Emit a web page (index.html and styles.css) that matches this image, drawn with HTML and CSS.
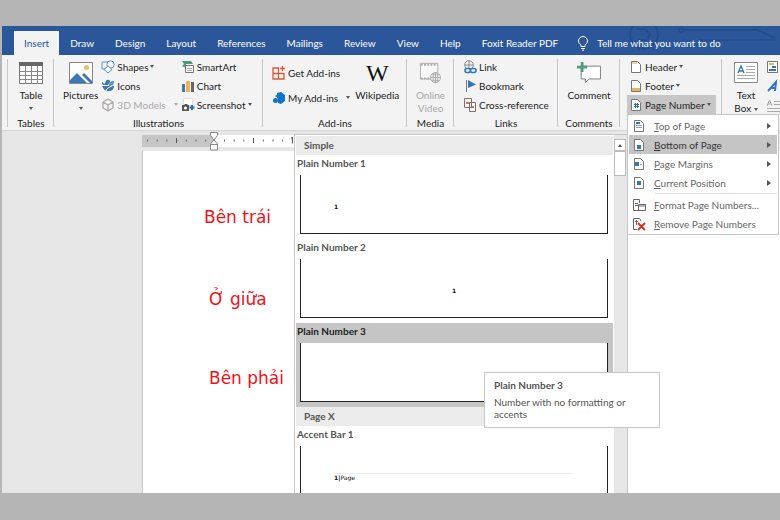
FILE: index.html
```
<!DOCTYPE html>
<html lang="en">
<head>
<meta charset="utf-8">
<title>Document - Word</title>
<link rel="stylesheet" href="styles.css">
</head>
<body>
<main class="app">
  <nav class="tabs" aria-label="Ribbon tabs">
    <button class="tab active">Insert</button>
    <button class="tab">Draw</button>
    <button class="tab">Design</button>
    <button class="tab">Layout</button>
    <button class="tab">References</button>
    <button class="tab">Mailings</button>
    <button class="tab">Review</button>
    <button class="tab">View</button>
    <button class="tab">Help</button>
    <button class="tab">Foxit Reader PDF</button>
    <button class="tab tell">
      <svg width="12" height="15" viewBox="0 0 12 15" fill="none" stroke="#fff"><path d="M4 10.500V9C2.500 7.800 1.500 6.800 1.500 5a4.500 4.500 0 0 1 9 0c0 1.800-1 2.800-2.500 4v1.500zM4 12.500h4M5 14.200h2"/></svg>
      Tell me what you want to do
    </button>
    <svg class="swirl" width="156" height="29" viewBox="0 0 156 29" fill="none" stroke="#264d8b" stroke-width="2"><circle cx="20" cy="9" r="14"/><path d="M13 3h8l5 5-3 6h-9M60 4h74l18 9M74 14h78"/><circle cx="57" cy="4" r="2"/></svg>
  </nav>

  <section class="ribbon" aria-label="Insert">
    <div class="group">
      <div class="tools">
        <button class="big">
          <svg width="24" height="22" viewBox="0 0 24 22"><path fill="#fff" stroke="#777" d="M.5.500h23v21H.5z"/><path fill="#666" d="M0 0h24v4H0z"/><path stroke="#888" d="M0 9.500h24M0 13.500h24M0 17.500h24M6.500 4v18M12.500 4v18M18.500 4v18"/></svg>
          <span>Table</span><i class="caret"></i>
        </button>
      </div>
      <h2>Tables</h2>
    </div>
    <div class="group">
      <div class="tools start">
        <button class="big">
          <svg width="24" height="22" viewBox="0 0 24 22"><path fill="#fff" stroke="#888" d="M.5.500h23v21H.5z"/><circle cx="17.500" cy="5.500" r="2.500" fill="#eebc6b"/><path fill="#3c78b4" d="M1 21v-3l7-7 10 10zM13 13l2-2 8 8v2h-2z"/></svg>
          <span>Pictures</span><i class="caret"></i>
        </button>
        <div class="stack shapes">
          <button class="row"><svg width="14" height="14" viewBox="0 0 14 14" fill="#f3f8fd" stroke="#5b8dbf"><path d="M1 2h6v7H1z"/><circle cx="9.500" cy="4.500" r="3.700"/><path d="M7 6l4 3.500L7 13 3 9.500z"/></svg>Shapes<i class="caret"></i></button>
          <button class="row"><svg width="14" height="14" viewBox="0 0 14 14"><path fill="#3f78ad" d="M1 3l3 2c0-3 2-5 4-4 1 0 1 1 1 2L7 6H3C1 6 1 4 1 3zM1 7h12c0 3-2 5-5 5-3 1-5-1-7-5z"/><path fill="#5b94c6" d="M8 6c0-3 2-4 5-4 0 3-1 5-5 5z"/><path stroke="#fff" fill="none" d="M5 12c1-3 3-4 6-5"/></svg>Icons</button>
          <button class="row off"><svg width="14" height="14" viewBox="0 0 14 14" fill="none" stroke="#aaa" stroke-width="1.300"><path d="M7 1l5 3v6l-5 3-5-3V4zM2 4l5 3 5-3M7 7v6"/></svg>3D Models<i class="caret far"></i></button>
        </div>
        <div class="stack">
          <button class="row"><svg width="14" height="14" viewBox="0 0 14 14"><path fill="#4c9c7c" d="M1 1h9l2 3H5v4L1 6l2-2z"/><path fill="#fff" stroke="#777" d="M4.500 5.500h8v7h-8z"/><path stroke="#aaa" d="M6 8.500h5M6 10.500h5"/></svg>SmartArt</button>
          <button class="row"><svg width="14" height="14" viewBox="0 0 14 14"><path fill="#3f78ad" d="M1 5h3v8H1z"/><path fill="#e9b35f" d="M5 2h4v11H5z"/><path fill="#666" d="M10 3h3v10h-3z"/></svg>Chart</button>
          <button class="row"><svg width="14" height="14" viewBox="0 0 14 14"><path fill="#fff" stroke="#ddd" d="M2.500.500h9v7h-9z"/><path fill="#555" d="M1 7h2l1-1h2l1 1h1v6H1z"/><circle cx="4.500" cy="10" r="1.600" fill="#fff"/><path stroke="#2d6da8" stroke-width="2" d="M8.500 9.500h5M11 7v5"/></svg>Screenshot<i class="caret"></i></button>
        </div>
      </div>
      <h2>Illustrations</h2>
    </div>
    <div class="group">
      <div class="tools start">
        <div class="stack pair">
          <button class="row"><svg width="14" height="14" viewBox="0 0 14 14" fill="none" stroke="#d7593c" stroke-width="1.300"><path d="M7 2H1v11h11V7M1 7.500h11M6.500 2v11M10.500 0v5M8 2.500h5"/></svg>Get Add-ins</button>
          <button class="row"><svg width="14" height="14" viewBox="0 0 14 14" fill="#1373c5"><path d="M5 2l4-1 4 3v6l-4 3-3-1V9L5 6z"/><circle cx="3.500" cy="9.500" r="2.500"/><path d="M3 5l3-2v4z"/></svg>My Add-ins<i class="caret far"></i></button>
        </div>
        <button class="big wiki">
          <b>W</b>
          <span>Wikipedia</span>
        </button>
      </div>
      <h2>Add-ins</h2>
    </div>
    <div class="group">
      <div class="tools">
        <button class="big off">
          <svg width="24" height="22" viewBox="0 0 24 24" fill="none" stroke="#aaa"><path fill="#f8f8f8" d="M1.500 1.500h19v17h-19z"/><path stroke-width="2" stroke-dasharray="2 1.500" d="M2 3h18M2 18h10"/><circle cx="18" cy="17" r="5.500" fill="#f3f3f3"/><path d="M12.500 17h11M18 11.500v11M14 14h8M14 20h8"/><ellipse cx="18" cy="17" rx="2.500" ry="5.500"/></svg>
          <span>Online<br>Video</span>
        </button>
      </div>
      <h2>Media</h2>
    </div>
    <div class="group">
      <div class="tools start">
        <div class="stack">
          <button class="row"><svg width="14" height="14" viewBox="0 0 14 14" fill="none"><g stroke="#888"><circle cx="6" cy="5" r="4.300"/><path d="M2 5h8M6 1v8"/></g><g stroke="#2d75b6" stroke-width="1.600" fill="#f3f3f3"><rect x="2" y="8.500" width="5.500" height="4" rx="2"/><rect x="7.500" y="8.500" width="5.500" height="4" rx="2"/></g></svg>Link</button>
          <button class="row"><svg width="14" height="14" viewBox="0 0 14 14"><path stroke="#777" d="M3.500 1v12"/><path fill="#3676b0" d="M5 1l8 4.500L5 9z"/></svg>Bookmark</button>
          <button class="row"><svg width="14" height="14" viewBox="0 0 14 14" fill="#fff" stroke="#8c6a66"><path d="M1.500.500h7v9h-7zM6.500 4.500h6v9h-6z"/><path stroke="#c74634" stroke-width="1.500" d="M3 5h4M8 9h3"/></svg>Cross-reference</button>
        </div>
      </div>
      <h2>Links</h2>
    </div>
    <div class="group">
      <div class="tools">
        <button class="big">
          <svg width="26" height="22" viewBox="0 0 26 24"><path fill="#fff" stroke="#777" d="M4.500 4.500h21v14H13l-4 4v-4H4.500z"/><path stroke="#4c9c7c" stroke-width="3" d="M0 5.500h11M5.500 0v11"/></svg>
          <span>Comment</span>
        </button>
      </div>
      <h2>Comments</h2>
    </div>
    <div class="group">
      <div class="tools start hf">
        <div class="stack">
          <button class="row"><svg width="14" height="14" viewBox="0 0 14 14"><path fill="#fff" stroke="#777" d="M2.500 1.500h6l3 3v8h-9z"/><path fill="#f2d39c" d="M3 2h5v2H3z"/></svg>Header<i class="caret"></i></button>
          <button class="row"><svg width="14" height="14" viewBox="0 0 14 14"><path fill="#fff" stroke="#777" d="M2.500 1.500h6l3 3v8h-9z"/><path fill="#e9b35f" d="M3 9h8v3H3z"/></svg>Footer<i class="caret"></i></button>
          <button class="row open"><svg width="14" height="14" viewBox="0 0 14 14"><path fill="#fff" stroke="#777" d="M2.500 1.500h6l3 3v8h-9z"/><path stroke="#2d6da8" d="M5 6.500h5M5 8.500h5M6.500 5v5M8.500 5v5"/></svg>Page Number<i class="caret"></i></button>
        </div>
      </div>
    </div>
    <div class="group text">
      <div class="tools start">
        <button class="big">
          <svg width="24" height="22" viewBox="0 0 24 22"><path fill="#fff" stroke="#888" d="M.5.500h23v20H.5z"/><path fill="none" stroke="#3676b0" stroke-width="1.300" d="M4 11l3-7 3 7M5 9h4"/><path stroke="#aaa" d="M12 4.500h9M12 7.500h9M12 10.500h9M3 13.500h18M3 16.500h18"/></svg>
          <span>Text<br>Box <i class="caret"></i></span>
        </button>
        <div class="stack">
          <button class="row" aria-label="Quick Parts"><svg width="14" height="14" viewBox="0 0 14 14"><path fill="#fff" stroke="#777" d="M1.500 1.500h10v11h-10z"/><path fill="#e9b35f" d="M3 3h5v2H3z"/><path stroke="#3676b0" stroke-width="2" d="M6 7h4M3 10h7"/></svg></button>
          <button class="row" aria-label="WordArt"><svg width="14" height="14" viewBox="0 0 14 14" fill="none" stroke="#3676c0" stroke-width="2"><path d="M2 12l8-9-1 9M4 9h6"/></svg></button>
          <button class="row" aria-label="Drop Cap"><svg width="14" height="14" viewBox="0 0 14 14" fill="none" stroke="#aaa"><path d="M1 8l2.500-6L6 8M2 6h3M8 3.500h6M8 6.500h6M1 10.500h13M1 13.500h13"/></svg></button>
        </div>
      </div>
    </div>
  </section>

  <section class="workspace">
    <svg class="ruler" width="153" height="20" viewBox="0 0 153 20"><path fill="#c6c6c6" d="M0 4h72v12H0z"/><path fill="#fff" d="M72 4h81v12H72z"/><path stroke="#666" stroke-width="2" stroke-dasharray="1 8.700" d="M5 9.500h66M82 9.500h66"/><path stroke="#555" d="M34.500 7v5M111.500 7v5M149.500 6.500h1v6"/><path fill="#fff" stroke="#888" d="M68.500 1.500h7v3L72 9l3.500 4v6h-7v-6L72 9l-3.500-4.500zM68.500 13.500h7"/></svg>
    <article class="page">
      <p>Bên trái</p>
      <p class="mid">Ở giữa</p>
      <p class="low">Bên phải</p>
    </article>
  </section>

  <section class="gallery" aria-label="Bottom of Page gallery">
    <div class="list">
      <h3>Simple</h3>
      <button class="item"><span>Plain Number 1</span><span class="frame"><small><b>1</b></small></span></button>
      <button class="item"><span>Plain Number 2</span><span class="frame center"><small><b>1</b></small></span></button>
      <button class="item chosen"><span>Plain Number 3</span><span class="frame"></span></button>
      <h3>Page X</h3>
      <button class="item"><span>Accent Bar 1</span><span class="frame bar"><small><b>1|</b>Page</small></span></button>
    </div>
    <div class="scroll"><button aria-label="Scroll up"><i class="caret up"></i></button><div class="thumb"></div></div>
  </section>

  <div class="menu" role="menu">
    <button role="menuitem"><svg width="14" height="14" viewBox="0 0 14 14"><path fill="#fff" stroke="#777" d="M2.500 1.500h6l3 3v8h-9z"/><path stroke="#3676b0" stroke-width="2" d="M4 4h4"/><path stroke="#7ea6cf" d="M4 6.500h6M4 8.500h6"/></svg><span><u>T</u>op of Page</span><i class="arrow"></i></button>
    <button role="menuitem" class="hot"><svg width="14" height="14" viewBox="0 0 14 14"><path fill="#fff" stroke="#777" d="M2.500 1.500h6l3 3v8h-9z"/><path fill="#3676b0" d="M5 7h4v4H5z"/></svg><span><u>B</u>ottom of Page</span><i class="arrow"></i></button>
    <button role="menuitem"><svg width="14" height="14" viewBox="0 0 14 14"><path fill="#fff" stroke="#777" d="M2.500 1.500h6l3 3v8h-9z"/><path fill="#3676b0" d="M3 5h4v4H3z"/><path stroke="#7ea6cf" d="M8 7.500h2"/></svg><span><u>P</u>age Margins</span><i class="arrow"></i></button>
    <button role="menuitem"><svg width="14" height="14" viewBox="0 0 14 14"><path fill="#fff" stroke="#777" d="M2.500 1.500h6l3 3v8h-9z"/><path fill="#3676b0" d="M5 5h4v4H5z"/></svg><span><u>C</u>urrent Position</span><i class="arrow"></i></button>
    <hr>
    <button role="menuitem"><svg width="14" height="14" viewBox="0 0 14 14" fill="#fff" stroke="#666"><path d="M7 12.500H1.500v-11h6V5"/><path d="M3 5.500h3M3 7.500h3M6.500 6.500h7v6h-7zM6.500 8h7"/></svg><span><u>F</u>ormat Page Numbers...</span></button>
    <button role="menuitem"><svg width="14" height="14" viewBox="0 0 14 14" fill="none" stroke="#666"><path fill="#fff" d="M5 12.500H1.500v-11h6L9 4"/><path d="M3 4.500h3M4.500 3v5"/><path stroke="#d03a22" stroke-width="2" d="M6 6l7 7M13 6l-7 7"/></svg><span><u>R</u>emove Page Numbers</span></button>
  </div>

  <div class="tooltip" role="tooltip">
    <strong>Plain Number 3</strong>
    <p>Number with no formatting or accents</p>
  </div>
</main>
</body>
</html>
```
FILE: styles.css
```
* { box-sizing: border-box; }
body {
  margin: 0;
  height: 100vh;
  padding: 26px 0 27px 2px;
  background: #b5b5b5;
  font: 10px/14px Lato, "Open Sans", sans-serif;
  color: #222;
}
button {
  border: 0;
  padding: 0;
  margin: 0;
  background: none;
  font: inherit;
  color: inherit;
  white-space: nowrap;
}
h2, h3, p { margin: 0; font-size: inherit; }
svg { display: block; flex: none; }

.app {
  position: relative;
  height: 100%;
  display: flex;
  flex-direction: column;
  overflow: hidden;
  background: #e6e6e6;
}

.tabs {
  position: relative;
  display: flex;
  gap: 1px;
  height: 29px;
  padding: 5px 0 0 12px;
  background: #2b579a;
  color: #fff;
}
.tab { padding: 0 10px; position: relative; z-index: 1; }
.tab.active { background: #f3f3f3; color: #2b579a; }
.tell { display: flex; align-items: center; gap: 8px; padding-left: 8px; }
.swirl { position: absolute; right: 0; top: 0; }

.ribbon {
  display: grid;
  grid-template-columns: 52px 209px 144px 47px 104px 62px 102px 1fr;
  height: 76px;
  padding-top: 2px;
  background: #f3f3f3 linear-gradient(#c6c6c6, #c6c6c6) 5px 4px / 1px 68px no-repeat;
  border-bottom: 1px solid #d5d5d5;
}
.group {
  display: flex;
  flex-direction: column;
  min-width: 0;
  background: linear-gradient(#c6c6c6, #c6c6c6) right 2px / 1px 68px no-repeat;
}
.group:first-child { padding-left: 6px; }
.group.text { background: none; overflow: hidden; }
.group h2 { font-weight: 400; line-height: 18px; text-align: center; }
.tools { display: flex; height: 57px; justify-content: center; }
.tools.start { justify-content: flex-start; padding-left: 9px; }
.big {
  display: flex;
  flex-direction: column;
  align-items: center;
  padding-top: 5px;
  line-height: 13px;
}
.big > span { padding-top: 5px; }
.big > .caret { margin: 5px 0 0; }
.stack { display: flex; flex-direction: column; }
.row { display: flex; align-items: center; height: 19px; gap: 2px; }
.off { color: #a8a8a8; }
.caret {
  display: inline-block;
  border: 2px solid transparent;
  border-top: 3px solid #555;
  border-bottom: 0;
  vertical-align: middle;
}
.caret.far { margin-left: 6px; }
.off .caret { border-top-color: #aaa; }
.caret.up { border-top: 0; border-bottom: 3px solid #555; }
.shapes { padding: 0 3px; }
.pair { padding: 6px 5px 0 0; gap: 6px; }
.wiki b { font: 24px/22px "Liberation Serif", serif; color: #111; }
.tools.hf { padding-left: 7px; }
.hf .row { padding: 0 5px 0 2px; }
.open { background: #c6c6c6; }
.text .tools { padding-left: 12px; gap: 8px; }

.workspace { flex: 1; display: flex; flex-direction: column; }
.ruler { margin-left: 140px; }
.page {
  flex: 1;
  margin-left: 140px;
  padding: 55px 0 0 61px;
  background: #fff;
  border-left: 1px solid #c6c6c6;
  color: #f01018;
  font: 17px/22px "DejaVu Sans", sans-serif;
}
.page .mid { padding: 60px 0 0 5px; }
.page .low { padding: 57px 0 0 5px; }

.gallery {
  position: absolute;
  left: 292px;
  top: 108px;
  bottom: 0;
  width: 334px;
  display: flex;
  overflow: hidden;
  background: #fff;
  border: 1px solid #c6c6c6;
  border-bottom: 0;
  color: #555;
}
.list { flex: 1; padding: 1px 1px 0; font-weight: 700; }
.list h3 { padding-left: 8px; line-height: 19px; background: #ebebeb; }
.item {
  display: flex;
  flex-direction: column;
  gap: 4px;
  width: 100%;
  height: 84px;
  padding: 0 5px 5px 4px;
  line-height: 16px;
  text-align: left;
}
.item > span:first-child { margin-left: -3px; }
.item.chosen { background: #c5c5c5; color: #222; }
.frame {
  flex: 1;
  align-self: stretch;
  padding: 24px 33px 0;
  border: 1px solid #222;
  border-top: 0;
  background: #fff;
}
.frame.center { text-align: center; }
.frame small { display: block; font: 6px/16px "DejaVu Sans", sans-serif; color: #111; }
.frame.bar { padding-top: 27px; }
.frame.bar small { border-top: 1px solid #eee; line-height: 8px; }
.scroll { width: 13px; padding-top: 4px; background: #e6e6e6; }
.scroll button { display: flex; align-items: center; justify-content: center; width: 12px; height: 12px; background: #fff; border: 1px solid #bbb; }
.thumb { width: 12px; height: 25px; background: #fff; border: 1px solid #bbb; }

.menu {
  position: absolute;
  left: 625px;
  top: 88px;
  width: 152px;
  padding: 1px;
  background: #fff;
  border: 1px solid #c6c6c6;
  color: #666;
}
.menu button {
  display: flex;
  align-items: center;
  gap: 8px;
  width: 100%;
  height: 19px;
  padding: 0 6px 0 3px;
  text-align: left;
}
.menu span { flex: 1; }
.menu .hot { background: #c5c5c5; color: #333; }
.menu hr { margin: 1px 0 1px 26px; border: 0; border-top: 1px solid #ddd; }
.arrow { border: 3px solid transparent; border-left: 4px solid #555; border-right: 0; }

.tooltip {
  position: absolute;
  left: 482px;
  top: 346px;
  width: 176px;
  padding: 5px 9px 7px;
  background: #fff;
  border: 1px solid #c6c6c6;
  color: #555;
}
.tooltip strong { display: block; }
.tooltip p { padding-top: 4px; line-height: 12px; }
```
